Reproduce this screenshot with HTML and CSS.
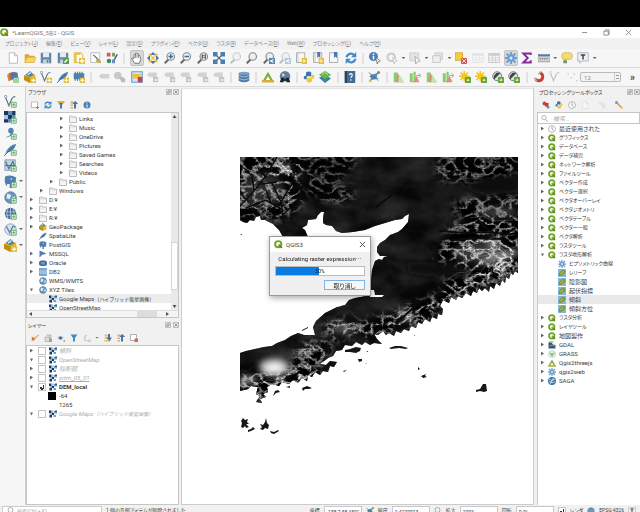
FILE: index.html
```html
<!DOCTYPE html>
<html lang="ja">
<head>
<meta charset="utf-8">
<title>LearnQGIS - QGIS</title>
<link rel="stylesheet" href="styles.css">
</head>
<body>
<svg class="defs" aria-hidden="true">
  <symbol id="q" viewBox="0 0 16 16"><circle cx="7.500" cy="7.500" r="5.500" fill="#fff" stroke="#6fa42c" stroke-width="3.500"/><path d="M8 8l6 6" stroke="#4f8a1c" stroke-width="3"/><path d="M7 7h4L7 11z" fill="#edb93b"/></symbol>
  <symbol id="file" viewBox="0 0 16 16"><path d="M3 1h7l4 4v10H3z" fill="#fff" stroke="#aaa"/><path d="M10 1v4h4" fill="#eee" stroke="#aaa"/></symbol>
  <symbol id="open" viewBox="0 0 16 16"><path d="M1 3h5l2 2h6v9H1z" fill="#d9a827"/><path d="M4 7h12l-3 7H1z" fill="#f7d56e" stroke="#deb23c"/></symbol>
  <symbol id="save" viewBox="0 0 16 16"><path d="M1 1h14v14H1z" fill="#6486a8"/><path d="M4 1h8v6H4z" fill="#e4ebf1"/><path d="M4 10h8v5H4z" fill="#c3d1de"/><path d="M9 11h2v3H9z" fill="#506d8b"/></symbol>
  <symbol id="saveas" viewBox="0 0 16 16"><use href="#save"/><path d="M8 8h8v8H8z" fill="#5a9c55"/><path d="M10 14l4-4" stroke="#fff" stroke-width="2"/></symbol>
  <symbol id="layout" viewBox="0 0 16 16"><path d="M2 1h9l2 3v10H2z" fill="#fff" stroke="#c8a436"/><path d="M1 1h4v14H1zM1 1h9v3H1z" fill="#e8c451"/><path d="M8 8h8v8H8z" fill="#e7bf2f"/><path d="M12 9v6M9 12h6" stroke="#fff" stroke-width="2"/></symbol>
  <symbol id="manager" viewBox="0 0 16 16"><path d="M1 1h12v13H1z" fill="#fff" stroke="#aaa"/><path d="M4 4l3 2 7 8" stroke="#6688a9" stroke-width="2" fill="none"/><path d="M8 11l6 3" stroke="#dfae2d" stroke-width="3"/></symbol>
  <symbol id="style" viewBox="0 0 16 16"><path d="M1 1h5v5H1z" fill="#d45e4d"/><path d="M8 1h4v5H8z" fill="#7a9f68"/><circle cx="4" cy="12" r="3" fill="#42885a"/><path d="M9 14l6-11" stroke="#555" stroke-width="2"/><path d="M8 10h4v5H8z" fill="#6591be"/></symbol>
  <symbol id="hand" viewBox="0 0 16 16"><path d="M5 15l-4-6q0-2 3 0V4q1-2 2 0V2q1-2 2 0v1q1-2 2 0v2q2-1 2 1l1 4-2 5z" fill="#fff" stroke="#555"/><path d="M6 4v4M8 3v5M10 4v4" stroke="#777" fill="none"/></symbol>
  <symbol id="pan" viewBox="0 0 16 16"><path d="M8 0l4 4H4zM8 16l4-4H4zM0 8l4-4v8zM16 8l-4-4v8z" fill="#4877ac"/><path d="M0 0h4v4H0zM12 0h4v4h-4zM0 12h4v4H0zM12 12h4v4h-4zM4 4h8v8H4z" fill="#edc63e" transform="translate(4 4) scale(.5)"/><path d="M2 2h3v3H2zM11 2h3v3h-3zM2 11h3v3H2zM11 11h3v3h-3z" fill="#edc63e"/></symbol>
  <symbol id="lens" viewBox="0 0 16 16"><path d="M6 10l-5 5" stroke="#666" stroke-width="2.500"/><circle cx="9" cy="6" r="5" fill="#e9f0f5" stroke="#888" stroke-width="1.500"/></symbol>
  <symbol id="zin" viewBox="0 0 16 16"><use href="#lens"/><path d="M9 3v6M6 6h6" stroke="#376da9" stroke-width="2"/></symbol>
  <symbol id="zout" viewBox="0 0 16 16"><use href="#lens"/><path d="M6 6h6" stroke="#376da9" stroke-width="2"/></symbol>
  <symbol id="znat" viewBox="0 0 16 16"><use href="#lens"/><path d="M7 3v6M11 3v6M9 4v1M9 7v1" stroke="#444" stroke-width="1.500"/></symbol>
  <symbol id="zlast" viewBox="0 0 16 16"><use href="#lens"/><path d="M8 8h8v8H8z" fill="#5486ba"/><path d="M14 10l-4 2 4 2" stroke="#fff" fill="none" stroke-width="1.500"/></symbol>
  <symbol id="full" viewBox="0 0 16 16"><path d="M3 3l10 10M13 3L3 13" stroke="#666" stroke-width="1.500"/><path d="M0 0h6v6H0zM10 0h6v6h-6zM0 10h6v6H0zM10 10h6v6h-6z" fill="#4b7eb0"/></symbol>
  <symbol id="bookadd" viewBox="0 0 16 16"><path d="M2 1h11v13H2z" fill="#f6f6f6" stroke="#999"/><path d="M4 1v13" stroke="#bbb"/><path d="M9 8h7v8H9z" fill="#e6bd32"/><path d="M12 9v6M10 12h5" stroke="#fff"/></symbol>
  <symbol id="book" viewBox="0 0 16 16"><path d="M2 1h11v13H2z" fill="#f6f6f6" stroke="#999"/><path d="M8 0h4v8l-2-2-2 2z" fill="#4e78a8"/></symbol>
  <symbol id="bookmark" viewBox="0 0 16 16"><use href="#bookadd"/><path d="M7 0h4v8L9 6 7 8z" fill="#4e78a8"/></symbol>
  <symbol id="refresh" viewBox="0 0 16 16"><path d="M2 7a6 6 0 0 1 10-3M14 9a6 6 0 0 1-10 3" fill="none" stroke="#4289c8" stroke-width="3"/><path d="M15 0v7H8zM1 16V9h7z" fill="#4289c8"/></symbol>
  <symbol id="info" viewBox="0 0 16 16"><circle cx="8" cy="8" r="7" fill="#4a80b8"/><path d="M8 3v2M8 7v6" stroke="#fff" stroke-width="2"/></symbol>
  <symbol id="ident" viewBox="0 0 16 16"><circle cx="6" cy="6" r="6" fill="#4a80b8"/><path d="M6 2v2M6 5v5" stroke="#fff" stroke-width="2"/><path d="M9 7l6 5-3 1-1 3z" fill="#fff" stroke="#666"/></symbol>
  <symbol id="gear" viewBox="0 0 16 16"><circle cx="8" cy="8" r="5" fill="#6d9ed1"/><path d="M8 0v16M0 8h16M2 2l12 12M14 2L2 14" stroke="#6d9ed1" stroke-width="2.500"/><circle cx="8" cy="8" r="2" fill="#dde8f4"/></symbol>
  <symbol id="graygear" viewBox="0 0 16 16"><circle cx="7" cy="7" r="5" fill="none" stroke="#ccc" stroke-width="3"/><path d="M9 7l6 5-3 1-1 3z" fill="#fff" stroke="#bbb"/></symbol>
  <symbol id="select" viewBox="0 0 16 16"><path d="M1 1h12v11H1z" fill="#e3e3e3" stroke="#bbb" stroke-dasharray="2 1"/><path d="M8 6l7 6-4 1-2 3z" fill="#fff" stroke="#999"/></symbol>
  <symbol id="forms" viewBox="0 0 16 16"><path d="M4 1h10v9H4z" fill="#e3e3e3" stroke="#ccc"/><path d="M1 5h10v9H1z" fill="#eee" stroke="#bbb"/></symbol>
  <symbol id="desel" viewBox="0 0 16 16"><path d="M0 1h10v10H0z" fill="#f3cf33" stroke="#ca9e24"/><path d="M8 8h8v8H8z" fill="#d95650"/><path d="M9 9l6 6M15 9l-6 6" stroke="#fff"/></symbol>
  <symbol id="table" viewBox="0 0 16 16"><path d="M1 2h14v12H1z" fill="#f6f6f6" stroke="#bbb"/><path d="M1 2h14v3H1z" fill="#c8ced5"/><path d="M1 8h14M1 11h14M6 2v12M10 2v12" stroke="#ccc"/></symbol>
  <symbol id="sigma" viewBox="0 0 16 16"><path d="M13 4V2H3l6 6-6 6h10v-3" fill="none" stroke="#872b94" stroke-width="2.500"/></symbol>
  <symbol id="ruler" viewBox="0 0 16 16"><path d="M0 3h16v3H0z" fill="#5f7990"/><path d="M0 8h16v5H0z" fill="#ddd" stroke="#888"/><path d="M3 8v3M6 8v3M9 8v3M12 8v3" stroke="#777"/></symbol>
  <symbol id="tip" viewBox="0 0 16 16"><rect x="1" y="1" width="14" height="9" rx="4" fill="#f5dc71" stroke="#d1b149"/><path d="M4 9v5l5-5z" fill="#e6c451"/><path d="M3 11h5v4H3z" fill="#6e9c68"/></symbol>
  <symbol id="note" viewBox="0 0 16 16"><path d="M1 1h14v11H7l-3 3v-3H1z" fill="#edf1f4" stroke="#9aa7b2"/><path d="M5 4h6M8 4v6" stroke="#444" stroke-width="2"/></symbol>
  <symbol id="layers" viewBox="0 0 16 16"><path d="M0 5l9-3 2 8-9 4z" fill="#d58b39"/><path d="M2 3l9-2 3 8-10 3z" fill="#bd6257"/><path d="M5 2h9l1 8-9 1z" fill="#4879aa"/></symbol>
  <symbol id="plus" viewBox="0 0 16 16"><path d="M9 9h6v6H9z" fill="#eef6ec" stroke="#58a252"/><path d="M12 10v4M10 12h4" stroke="#58a252"/></symbol>
  <symbol id="star" viewBox="0 0 16 16"><path d="M9 9h7v7H9z" fill="#e4bb2e"/><path d="M12.500 10v5M10 12.500h5" stroke="#fff" stroke-width="1.500"/></symbol>
  <symbol id="pkg" viewBox="0 0 16 16"><path d="M0 6l7-4 8 3v7l-7 4-8-4z" fill="#e5b820"/><path d="M0 6l8 3v7l-8-4z" fill="#c18d13"/><path d="M2 5l6-5 5 5-5 3z" fill="#4f83b0"/><path d="M5 5l4-3" stroke="#d8e8f1" stroke-width="2"/></symbol>
  <symbol id="vee" viewBox="0 0 16 16"><path d="M2 3l4 10 4-9q1-2 4-2" fill="none" stroke="#687886" stroke-width="1.500"/><circle cx="2" cy="2" r="1.500" fill="#fff" stroke="#5c86ac"/></symbol>
  <symbol id="feather" viewBox="0 0 16 16"><path d="M1 14Q5 3 15 1q-2 10-12 11z" fill="#5284b4"/><path d="M0 16L12 4" stroke="#345c81"/></symbol>
  <symbol id="chip" viewBox="0 0 16 16"><path d="M1 3h14v8H1z" fill="#4f80ae"/><path d="M3 1v12M6 1v12M9 1v12M12 1v12" stroke="#4f80ae" stroke-width="1.500"/></symbol>
  <symbol id="raster" viewBox="0 0 16 16"><path d="M0 0h14v14H0z" fill="#a9c5df"/><path d="M0 0h5v5H0zM10 0h4v5h-4zM5 5h5v5H5zM0 10h5v4H0z" fill="#1e3656"/><path d="M5 0h5v5H5zM10 5h4v5h-4zM5 10h5v4H5z" fill="#5a8fc3"/></symbol>
  <symbol id="comma" viewBox="0 0 16 16"><path d="M3 12q5-1 5-4a3.500 3.500 0 1 1 4-4q0 7-9 9z" fill="#5381b2"/></symbol>
  <symbol id="mesh" viewBox="0 0 16 16"><path d="M1 1h13v13H1z" fill="#c2d3e2" stroke="#7c9ab6"/><path d="M2 3l4 9 5-9 3 9M1 8h13" fill="none" stroke="#52728f" stroke-width="1.500"/></symbol>
  <symbol id="eleph" viewBox="0 0 16 16"><path d="M1 2q7-3 14 1l-1 8-4 1v4H7v-5H4L3 14 1 9z" fill="#4f7fae"/><circle cx="9" cy="5" r="1" fill="#dce8f2"/></symbol>
  <symbol id="globe" viewBox="0 0 16 16"><circle cx="8" cy="8" r="7" fill="#6996c0" stroke="#45749f"/><path d="M4 3l5 2-2 5-4-1zM10 8l4-2-2 7z" fill="#e3edf5"/></symbol>
  <symbol id="wire" viewBox="0 0 16 16"><circle cx="8" cy="8" r="7" fill="#3f6894"/><path d="M1 6h14M1 10h14M8 1v14M5 2q-3 6 0 12M11 2q3 6 0 12" fill="none" stroke="#b9d0e4"/></symbol>
  <symbol id="vglobe" viewBox="0 0 16 16"><circle cx="8" cy="8" r="7" fill="#d5e3ee" stroke="#7ca0c0"/><path d="M3 4l4 8 4-8 3 1" fill="none" stroke="#577b99" stroke-width="1.500"/></symbol>
  <symbol id="label" viewBox="0 0 16 16"><path d="M1 7l3-3h11v6H4z" fill="#d2d2d2"/></symbol>
  <symbol id="label2" viewBox="0 0 16 16"><path d="M0 5l3-3h10v6H3z" fill="#d2d2d2"/><path d="M8 8h7v7H8z" fill="#c4c4c4"/><path d="M10 12h4" stroke="#fff" stroke-width="1.500"/></symbol>
  <symbol id="diagram" viewBox="0 0 16 16"><circle cx="5" cy="6" r="5" fill="#c9c9c9"/><path d="M7 8h5l3 3v4h-5z" fill="#bdbdbd"/></symbol>
  <symbol id="pin" viewBox="0 0 16 16"><path d="M1 1h14v14H1z" fill="#d2e6f6" stroke="#5c9fd6" stroke-width="1.500"/><path d="M2 4h11v6H2z" fill="#ecc13c"/><path d="M9 8h6v7H9z" fill="#d13e35"/></symbol>
  <symbol id="db" viewBox="0 0 16 16"><path d="M1 3v10q7 4 14 0V3z" fill="#4c7aaa"/><ellipse cx="8" cy="3" rx="7" ry="2" fill="#7ba0c5"/><path d="M1 6q7 4 14 0M1 10q7 4 14 0" fill="none" stroke="#c0d2e4"/></symbol>
  <symbol id="tri" viewBox="0 0 16 16"><path d="M8 1l8 14H0z" fill="#7eae39"/><path d="M8 7l3 5H5z" fill="#fff"/><path d="M0 12h16v3H0z" fill="#e0aa32"/></symbol>
  <symbol id="bino" viewBox="0 0 16 16"><circle cx="8" cy="7" r="7" fill="#60809f"/><path d="M4 3l4 2-3 3z" fill="#dce5ed"/><path d="M1 15l2-6h4v2h2V9h4l2 6h-5v-2H6v2z" fill="#222"/></symbol>
  <symbol id="py" viewBox="0 0 16 16"><path d="M4 5V2q4-3 7 0v5H5v4H2q-3-4 2-5z" fill="#3d74a6"/><path d="M12 11v3q-4 3-7 0V9h6V5h3q3 4-2 6z" fill="#f0c840"/></symbol>
  <symbol id="stack" viewBox="0 0 16 16"><path d="M0 9l8-4 8 5-8 6z" fill="#3d83a5"/><path d="M0 5l8-5 8 5-8 6z" fill="#67b64a"/><path d="M4 5l4-3 4 3" stroke="#d7eda1" fill="none"/></symbol>
  <symbol id="help" viewBox="0 0 16 16"><path d="M1 0h14v16H1z" fill="#456d94"/><path d="M1 0h3v16H1z" fill="#28445f"/><path d="M7 5q3-3 4 0 0 2-2 4M9 11v2" fill="none" stroke="#fff" stroke-width="1.500"/></symbol>
  <symbol id="georef" viewBox="0 0 16 16"><path d="M3 5l10-2-2 8-7 1z" fill="#5f93c4"/><path d="M1 2q5 3 13 11M14 1Q9 6 2 14M2 7l12 3" stroke="#4d6a84" fill="none"/><circle cx="3" cy="13" r="2" fill="#e0bd4d"/><circle cx="14" cy="2" r="2" fill="#5c9f51"/></symbol>
  <symbol id="hist" viewBox="0 0 16 16"><path d="M1 2h5v13H1z" fill="#86cf6c"/><path d="M4 15L6 2l4 9 5 4z" fill="#de8977"/><path d="M7 15l1-11 7 11z" fill="#c4e2b3"/></symbol>
  <symbol id="hist2" viewBox="0 0 16 16"><path d="M1 3h4v12H1zM6 1h3v14H6z" fill="#86cf6c"/><path d="M5 15l5-9 4 9z" fill="#d39486"/><path d="M10 6h5M13 3l3 3-3 3" stroke="#888" fill="none"/></symbol>
  <symbol id="sun" viewBox="0 0 16 16"><path d="M7 0v14M0 7h14M2 2l10 10M12 2L2 12" stroke="#efc522" stroke-width="2"/><circle cx="7" cy="7" r="4" fill="#f4c916"/><path d="M8 8h8v8H8z" fill="#67a83f"/><path d="M12 10l2 3h-4z" fill="#fff"/></symbol>
  <symbol id="contrast" viewBox="0 0 16 16"><circle cx="7" cy="7" r="6" fill="#ddd" stroke="#555"/><path d="M3 11L11 3a6 6 0 0 0-8 8z" fill="#444"/><path d="M8 8h8v8H8z" fill="#67a83f"/><path d="M12 10l2 3h-4z" fill="#fff"/></symbol>
  <symbol id="magnet" viewBox="0 0 16 16"><path d="M3 11l4 2q6 0 6-6 0-3-4-5" fill="none" stroke="#cf3e31" stroke-width="4"/><path d="M2 9l3 5M7 4l4-3" stroke="#aaa" stroke-width="2"/></symbol>
  <symbol id="dots" viewBox="0 0 16 16"><path d="M2 3h2v2H2zM10 3h2v2h-2zM6 8h2v2H6zM13 12h2v2h-2z" fill="#ccc"/></symbol>
  <symbol id="folder" viewBox="0 0 16 16"><path d="M1 2h5l2 2h7v11H1z" fill="#f4f4f4" stroke="#aaa" stroke-width="1.500"/><path d="M1 6h14" stroke="#ccc"/></symbol>
  <symbol id="arrow" viewBox="0 0 16 16"><path d="M1 1l14 6-9 3-5 5z" fill="#4f7fae"/></symbol>
  <symbol id="oracle" viewBox="0 0 16 16"><rect x="0" y="3" width="16" height="11" rx="5" fill="#446f9a"/><rect x="4" y="6" width="8" height="5" rx="2" fill="#6f98be"/></symbol>
  <symbol id="db2" viewBox="0 0 16 16"><path d="M0 0h16v16H0z" fill="#7ba7ce"/><path d="M2 5v6q4 0 4-3T2 5M8 5v6h2V5zM12 5h3v3h-3v3h3" fill="none" stroke="#dceaf5"/></symbol>
  <symbol id="xyz" viewBox="0 0 16 16"><path d="M0 1h5v5H0zM5 6h5v4H5zM1 10h5v5H1z" fill="#1d3a5e"/><path d="M10 2h6v5h-6zM9 10h5v4H9z" fill="#6a9dca"/><path d="M5 1h4v5H5zM1 6h4v4H1z" fill="#9abbd9"/><path d="M12 1h4v3h-4z" fill="#31587f"/></symbol>
  <symbol id="filter" viewBox="0 0 16 16"><path d="M1 1h14L10 8v7H6V8z" fill="#4b7ba7"/><path d="M1 1h14v3H1z" fill="#e0b43b"/></symbol>
  <symbol id="bluefilter" viewBox="0 0 16 16"><path d="M1 1h14L10 8v7H6V8z" fill="#4b88b8"/></symbol>
  <symbol id="collapse" viewBox="0 0 16 16"><path d="M1 1h8v4H1zM1 7h5v3H1zM1 12h5v3H1z" fill="#dfaa6b"/><path d="M8 15V6H5l6-6 5 6h-4v9z" fill="#4474a4"/></symbol>
  <symbol id="expand" viewBox="0 0 16 16"><path d="M1 1h6v4H1zM1 7h5v3H1zM1 12h12v3H1z" fill="#dfc174"/><path d="M8 0v7H4l7 7 5-7h-4V0z" fill="#4474a4"/></symbol>
  <symbol id="addsel" viewBox="0 0 16 16"><path d="M1 2h12v11H1z" fill="#fff" stroke="#aaa" stroke-width="1.500"/><path d="M10 13h6M13 10v6" stroke="#58a252" stroke-width="2"/></symbol>
  <symbol id="remove" viewBox="0 0 16 16"><path d="M1 1h12v12H1z" fill="#fff" stroke="#999" stroke-width="1.500"/><path d="M9 9h7v7H9z" fill="#d9665d"/></symbol>
  <symbol id="brush" viewBox="0 0 16 16"><path d="M1 6q4-1 8 3-3 6-8 4 2-3 0-7z" fill="#dc773e"/><path d="M7 9l8-7" stroke="#e2ba42" stroke-width="3"/></symbol>
  <symbol id="group" viewBox="0 0 16 16"><path d="M2 6h9v9H2zM5 2h9v11" fill="#ddd" stroke="#888"/><path d="M10 9h6v7h-6z" fill="#8cb388"/></symbol>
  <symbol id="eye" viewBox="0 0 16 16"><path d="M0 8q7-9 14 0-7 7-14 0z" fill="#b7c6d3"/><circle cx="7" cy="8" r="3" fill="#466987"/><path d="M13 13h3v2h-3z" fill="#555"/></symbol>
  <symbol id="expr" viewBox="0 0 16 16"><path d="M8 3q-6-1-5 4 4-1 3 0-5 0-3 6h5M10 12h5v3h-5z" fill="none" stroke="#bbb" stroke-width="1.500"/></symbol>
  <symbol id="clock" viewBox="0 0 16 16"><circle cx="8" cy="8" r="7" fill="#fafafa" stroke="#aaa" stroke-width="1.500"/><path d="M8 3v5l3 3" fill="none" stroke="#888" stroke-width="1.500"/></symbol>
  <symbol id="model" viewBox="0 0 16 16"><circle cx="5" cy="5" r="4" fill="#d4443a"/><path d="M6 4h7v7H6z" fill="#c83c36"/><circle cx="12" cy="12" r="3" fill="#678ba9"/></symbol>
  <symbol id="wrench" viewBox="0 0 16 16"><path d="M3 3l10 10" stroke="#999" stroke-width="3"/><circle cx="3" cy="3" r="3" fill="#8f9294"/><path d="M7 7l8 8" stroke="#e4b537" stroke-width="3"/></symbol>
  <symbol id="relief" viewBox="0 0 16 16"><path d="M0 0h16v16H0z" fill="#83b6d7"/><path d="M1 13Q3 4 10 1q6 1 4 7-6 8-13 5z" fill="#669c38"/><path d="M4 11q2-7 8-8-1 7-8 8z" fill="#e0cf57"/><path d="M6 9l5-5" stroke="#c45a42" stroke-width="2"/></symbol>
  <symbol id="gdal" viewBox="0 0 16 16"><path d="M1 3h6l3 4 5 1v7H1z" fill="#38576f"/><path d="M3 11q6-6 12 1" stroke="#77abd0" stroke-width="2" fill="none"/><path d="M2 2h9" stroke="#6d9b54" stroke-width="2"/></symbol>
  <symbol id="grass" viewBox="0 0 16 16"><circle cx="8" cy="8" r="7" fill="#e6efe5" stroke="#a6b9a6"/><path d="M8 13V6M8 10Q4 9 4 5M8 10q4-1 4-5" fill="none" stroke="#4b9b5c" stroke-width="1.500"/></symbol>
  <symbol id="saga" viewBox="0 0 16 16"><circle cx="8" cy="8" r="8" fill="#3875a7"/><path d="M2 4q5 5 12 1M2 9q6 4 12 1M4 14l7-12" fill="none" stroke="#e5f1f8" stroke-width="1.500"/></symbol>
  <symbol id="search" viewBox="0 0 16 16"><circle cx="7" cy="6" r="5" fill="none" stroke="#999" stroke-width="1.500"/><path d="M10 10l5 5" stroke="#999" stroke-width="2"/></symbol>
  <symbol id="float" viewBox="0 0 16 16"><rect x="1" y="1" width="14" height="14" rx="2" fill="#f4f4f4" stroke="#888" stroke-width="1.500"/><path d="M7 4h5v5H7zM4 7h5v5H4z" fill="none" stroke="#888" stroke-width="1.500"/></symbol>
  <symbol id="close" viewBox="0 0 16 16"><rect x="1" y="1" width="14" height="14" rx="2" fill="#eee" stroke="#888" stroke-width="1.500"/><path d="M4 4l8 8M12 4l-8 8" stroke="#777" stroke-width="2"/></symbol>
</svg>

<div class="letterbox"></div>
<header class="titlebar">
  <svg class="s9"><use href="#q"/></svg><h1>*LearnQGIS_<span class="ja">5章2</span> - QGIS</h1>
  <div class="winbtns">
    <button aria-label="最小化"><svg viewBox="0 0 8 8"><path d="M1 4h6" stroke="#888"/></svg></button>
    <button aria-label="元に戻す"><svg viewBox="0 0 8 8"><path d="M2.500 2V1H7v5H6M1 2.500h5V7H1z" fill="none" stroke="#888"/></svg></button>
    <button aria-label="閉じる"><svg viewBox="0 0 8 8"><path d="M1 1l6 6M7 1L1 7" stroke="#888"/></svg></button>
  </div>
</header>
<nav class="menubar">
  <a href="#">プロジェクト(<u>J</u>)</a><a href="#">編集(<u>E</u>)</a><a href="#">ビュー(<u>V</u>)</a><a href="#">レイヤ(<u>L</u>)</a><a href="#">設定(<u>S</u>)</a><a href="#">プラグイン(<u>P</u>)</a><a href="#">ベクタ(<u>O</u>)</a><a href="#">ラスタ(<u>R</u>)</a><a href="#">データベース(<u>D</u>)</a><a href="#">Web(<u>W</u>)</a><a href="#">プロセッシング(<u>C</u>)</a><a href="#">ヘルプ(<u>H</u>)</a>
</nav>

<div class="toolbar">
  <div class="group n7">
    <button aria-label="新規"><svg><use href="#file"/></svg></button>
    <button aria-label="開く"><svg><use href="#open"/></svg></button>
    <button aria-label="保存"><svg><use href="#save"/></svg></button>
    <button aria-label="別名保存"><svg><use href="#saveas"/></svg></button>
    <button aria-label="新規レイアウト"><svg><use href="#layout"/></svg></button>
    <button aria-label="レイアウト管理"><svg><use href="#manager"/></svg></button>
    <button aria-label="スタイル"><svg><use href="#style"/></svg></button>
  </div>
  <i class="grip"></i>
  <div class="group n14">
    <button class="on" aria-label="移動"><svg><use href="#hand"/></svg></button>
    <button aria-label="選択部に移動"><svg><use href="#pan"/></svg></button>
    <button aria-label="拡大"><svg><use href="#zin"/></svg></button>
    <button aria-label="縮小"><svg><use href="#zout"/></svg></button>
    <button aria-label="等倍"><svg><use href="#znat"/></svg></button>
    <button aria-label="全域"><svg><use href="#full"/></svg></button>
    <button class="dim" aria-label="選択部"><svg><use href="#lens"/></svg></button>
    <button aria-label="レイヤ"><svg><use href="#lens"/></svg></button>
    <button aria-label="前の表示"><svg><use href="#zlast"/></svg></button>
    <button class="dim" aria-label="次の表示"><svg><use href="#zlast"/></svg></button>
    <button aria-label="新規ビュー"><svg><use href="#bookadd"/></svg></button>
    <button aria-label="新規ブックマーク"><svg><use href="#bookmark"/></svg></button>
    <button aria-label="ブックマーク"><svg><use href="#book"/></svg></button>
    <button aria-label="更新"><svg><use href="#refresh"/></svg></button>
  </div>
  <i class="grip"></i>
  <div class="group n14">
    <button aria-label="地物情報"><svg><use href="#ident"/></svg></button>
    <button aria-label="アクション"><svg><use href="#graygear"/></svg></button><i class="dd"></i>
    <button aria-label="選択"><svg><use href="#select"/></svg></button><i class="dd"></i>
    <button aria-label="値で選択"><svg><use href="#forms"/></svg></button><i class="dd"></i>
    <button aria-label="選択解除"><svg><use href="#desel"/></svg></button>
    <button class="dim" aria-label="属性テーブル"><svg><use href="#table"/></svg></button>
    <button aria-label="計算機"><svg><use href="#table"/></svg></button>
    <button class="on" aria-label="ツールボックス"><svg><use href="#gear"/></svg></button>
    <button aria-label="統計"><svg><use href="#sigma"/></svg></button>
    <button aria-label="計測"><svg><use href="#ruler"/></svg></button><i class="dd"></i>
    <button aria-label="ヒント"><svg><use href="#tip"/></svg></button>
    <button aria-label="注記"><svg><use href="#note"/></svg></button><i class="dd"></i>
  </div>
  <div class="rest"></div>
</div>

<div class="toolbar">
  <div class="group n5">
    <button aria-label="データソース"><svg><use href="#layers"/><use href="#plus"/></svg></button>
    <button aria-label="GeoPackage作成"><svg><use href="#pkg"/><use href="#star"/></svg></button>
    <button aria-label="シェープ作成"><svg><use href="#vee"/><use href="#star"/></svg></button>
    <button aria-label="SpatiaLite作成"><svg><use href="#feather"/><use href="#star"/></svg></button>
    <button aria-label="仮レイヤ"><svg><use href="#chip"/><use href="#star"/></svg></button>
  </div>
  <i class="grip"></i>
  <div class="group n8">
    <button aria-label="ラベル"><svg><use href="#label"/></svg></button>
    <button aria-label="ダイアグラム"><svg><use href="#diagram"/></svg></button>
    <button aria-label="ピン強調"><svg><use href="#pin"/></svg></button>
    <button aria-label="ピン"><svg><use href="#label2"/></svg></button>
    <button aria-label="表示"><svg><use href="#label2"/></svg></button>
    <button aria-label="ラベル移動"><svg><use href="#label2"/></svg></button>
    <button aria-label="回転"><svg><use href="#label2"/></svg></button>
    <button aria-label="変更"><svg><use href="#label2"/></svg></button>
  </div>
  <i class="grip"></i>
  <div class="group n1"><button aria-label="DBマネージャ"><svg><use href="#db"/></svg></button></div>
  <i class="grip"></i>
  <div class="group n2">
    <button aria-label="Qgis2threejs"><svg><use href="#tri"/></svg></button>
    <button aria-label="メタ検索"><svg><use href="#bino"/></svg></button>
  </div>
  <i class="grip"></i>
  <div class="group n2">
    <button aria-label="Python"><svg><use href="#py"/></svg></button>
    <button aria-label="プラグイン"><svg><use href="#stack"/></svg></button>
  </div>
  <i class="grip"></i>
  <div class="group n1"><button aria-label="ヘルプ"><svg><use href="#help"/></svg></button></div>
  <i class="grip"></i>
  <div class="group n1"><button aria-label="ジオリファレンサ"><svg><use href="#georef"/></svg></button></div>
  <i class="grip"></i>
  <div class="group n8">
    <button aria-label="ヒストグラム"><svg><use href="#hist"/></svg></button>
    <button aria-label="全体ヒストグラム"><svg><use href="#hist2"/></svg></button>
    <button aria-label="累積カット"><svg><use href="#hist"/></svg></button>
    <button aria-label="全体累積カット"><svg><use href="#hist2"/></svg></button>
    <button aria-label="明るく"><svg><use href="#sun"/></svg></button>
    <button aria-label="暗く"><svg><use href="#sun"/></svg></button>
    <button aria-label="コントラスト増"><svg><use href="#contrast"/></svg></button>
    <button aria-label="コントラスト減"><svg><use href="#contrast"/></svg></button>
  </div>
  <i class="grip"></i>
  <div class="group n3">
    <button aria-label="スナップ"><svg><use href="#magnet"/></svg></button>
    <button class="dim" aria-label="頂点"><svg><use href="#vee"/></svg></button>
    <button aria-label="トポロジ"><svg><use href="#dots"/></svg></button>
  </div>
  <div class="spin"><input aria-label="許容範囲" value="12"><i class="updown"></i></div>
  <span class="more">»</span>
</div>

<main class="work">
  <aside class="strip">
    <div><button aria-label="ベクタ追加"><svg><use href="#vee"/><use href="#plus"/></svg></button></div>
    <div><button aria-label="ラスタ追加"><svg><use href="#raster"/><use href="#plus"/></svg></button></div>
    <div><button aria-label="CSV追加"><svg><use href="#comma"/><use href="#plus"/></svg></button></div>
    <div><button aria-label="SpatiaLite追加"><svg><use href="#feather"/><use href="#plus"/></svg></button></div>
    <div><button aria-label="仮想レイヤ追加"><svg><use href="#mesh"/><use href="#plus"/></svg></button></div>
    <div><button aria-label="PostGIS追加"><svg><use href="#eleph"/><use href="#plus"/></svg></button><i class="dd"></i></div>
    <div><button aria-label="WMS追加"><svg><use href="#globe"/><use href="#plus"/></svg></button><i class="dd"></i></div>
    <div><button aria-label="WCS追加"><svg><use href="#wire"/><use href="#plus"/></svg></button></div>
    <div><button aria-label="WFS追加"><svg><use href="#vglobe"/><use href="#plus"/></svg></button><i class="dd"></i></div>
    <div><button aria-label="GeoPackage追加"><svg><use href="#pkg"/><use href="#star"/></svg></button><i class="dd"></i></div>
  </aside>

  <div class="docks">
    <section class="dock browser">
      <div class="dockhead"><h2>ブラウザ</h2><button aria-label="分離"><svg><use href="#float"/></svg></button><button aria-label="閉じる"><svg><use href="#close"/></svg></button></div>
      <div class="docktools">
        <button aria-label="追加"><svg><use href="#addsel"/></svg></button><button aria-label="更新"><svg><use href="#refresh"/></svg></button><button aria-label="フィルタ"><svg><use href="#filter"/></svg></button><button aria-label="折りたたむ"><svg><use href="#collapse"/></svg></button><button aria-label="情報"><svg><use href="#info"/></svg></button>
      </div>
      <div class="frame">
        <ul class="tree">
          <li class="l3"><i class="tw"></i><svg><use href="#folder"/></svg>Links</li>
          <li class="l3"><i class="tw"></i><svg><use href="#folder"/></svg>Music</li>
          <li class="l3"><i class="tw"></i><svg><use href="#folder"/></svg>OneDrive</li>
          <li class="l3"><i class="tw"></i><svg><use href="#folder"/></svg>Pictures</li>
          <li class="l3"><i class="tw"></i><svg><use href="#folder"/></svg>Saved Games</li>
          <li class="l3"><i class="tw"></i><svg><use href="#folder"/></svg>Searches</li>
          <li class="l3"><i class="tw"></i><svg><use href="#folder"/></svg>Videos</li>
          <li class="l2"><i class="tw"></i><svg><use href="#folder"/></svg>Public</li>
          <li class="l1"><i class="tw"></i><svg><use href="#folder"/></svg>Windows</li>
          <li><i class="tw"></i><svg><use href="#folder"/></svg>D:¥</li>
          <li><i class="tw"></i><svg><use href="#folder"/></svg>E:¥</li>
          <li><i class="tw"></i><svg><use href="#folder"/></svg>R:¥</li>
          <li><i class="tw"></i><svg><use href="#pkg"/></svg>GeoPackage</li>
          <li><i class="tw none"></i><svg><use href="#feather"/></svg>SpatiaLite</li>
          <li><i class="tw none"></i><svg><use href="#eleph"/></svg>PostGIS</li>
          <li><i class="tw"></i><svg><use href="#arrow"/></svg>MSSQL</li>
          <li><i class="tw"></i><svg><use href="#oracle"/></svg>Oracle</li>
          <li><i class="tw"></i><svg><use href="#db2"/></svg>DB2</li>
          <li><i class="tw none"></i><svg><use href="#globe"/></svg>WMS/WMTS</li>
          <li><i class="tw open"></i><svg><use href="#globe"/></svg>XYZ Tiles</li>
          <li class="l1 sel"><i class="tw none"></i><svg><use href="#xyz"/></svg><span>Google Maps<span class="ja wide">（ハイブリッド衛星画像）</span></span></li>
          <li class="l1"><i class="tw none"></i><svg><use href="#xyz"/></svg>OpenStreetMap</li>
        </ul>
        <div class="vbar"><b class="up"></b><span></span><b class="down"></b></div>
        <div class="hbar"><b class="left"></b><span></span><b class="right"></b></div>
      </div>
    </section>
    <section class="dock layerpane">
      <div class="dockhead"><h2>レイヤー</h2><button aria-label="分離"><svg><use href="#float"/></svg></button><button aria-label="閉じる"><svg><use href="#close"/></svg></button></div>
      <div class="docktools">
        <button aria-label="スタイル"><svg><use href="#brush"/></svg></button><button aria-label="グループ"><svg><use href="#group"/></svg></button><button aria-label="テーマ"><svg><use href="#eye"/></svg></button><button aria-label="フィルタ"><svg><use href="#bluefilter"/></svg></button><button aria-label="式"><svg><use href="#expr"/></svg></button><i class="dd"></i><button aria-label="展開"><svg><use href="#expand"/></svg></button><button aria-label="折りたたむ"><svg><use href="#collapse"/></svg></button><button aria-label="削除"><svg><use href="#remove"/></svg></button>
      </div>
      <div class="frame">
        <ul class="tree">
          <li class="off"><i class="tw"></i><input type="checkbox" id="c1"><svg><use href="#xyz"/></svg><label for="c1">傾斜</label></li>
          <li class="off"><i class="tw open"></i><input type="checkbox" id="c2"><svg><use href="#xyz"/></svg><label for="c2">OpenStreetMap</label></li>
          <li class="off"><i class="tw"></i><input type="checkbox" id="c3"><svg><use href="#xyz"/></svg><label for="c3">陰影図</label></li>
          <li class="off"><i class="tw"></i><input type="checkbox" id="c4"><svg><use href="#xyz"/></svg><label for="c4"><u>srtm_05_01</u></label></li>
          <li class="cur"><i class="tw open"></i><input type="checkbox" id="c5" checked><svg><use href="#xyz"/></svg><label for="c5">DEM_local</label></li>
          <li class="leg"><i class="swatch black"></i>-64</li>
          <li class="leg"><i class="swatch"></i>1265</li>
          <li class="off"><i class="tw open"></i><input type="checkbox" id="c6"><svg><use href="#xyz"/></svg><label for="c6">Google Maps<span class="ja wide">（ハイブリッド衛星画像）</span></label></li>
        </ul>
      </div>
    </section>
  </div>

  <section class="canvas">
    <svg class="map" viewBox="182 89 351 415">
      <defs>
        <clipPath id="land">
          <path d="M240 157H518V273L515 271 513 275 511 273 509 279 506 277 505 283 502 280 500 286 496 283 494 289 490 286 489 292 485 288 482 291 479 288 477 293 473 291 471 296 466 293 462 298 458 296 456 300 451 297 449 303 443 300 440 306 443 309 442 315 438 314 437 319 432 317 430 322 425 319 422 324 418 322 416 328 411 326 409 331 404 329 401 333 396 331 394 336 389 333 386 335 383 331 378 335 374 334 377 339 382 344 374 343 370 345 365 342 362 345 356 342 352 346 345 345 342 350 336 351 333 356 328 358 324 361 320 364 326 365 330 361 337 362 334 367 330 366 328 372 323 371 320 375 315 372 312 377 308 375 307 381 302 378 298 383 293 380 289 384 282 382 279 386 272 384 267 387 268 392 263 394 266 397 260 399 262 403 256 402 260 396 256 394 258 387 251 386 248 389 240 391V353L246 351 255 349 264 347 272 346 277 343 285 340 291 336 298 333 304 335 315 335 313 327 316 321 325 313 337 307 345 305 349 300 355 298 366 296 370 290 372 270 375 261 379 259 382 260 384 257 388 256 380 256 377 252 377 247 380 243 385 240 390 235 398 232 402 229 408 222 409 214 405 216 402 219 395 220 385 223 375 226 365 230 353 232 342 233 336 231 332 226 326 225 323 223 323 218 324 212 321 212 318 215 316 219 308 220 307 225 302 228 305 230 308 237H283L279 230 273 224 265 220 261 220 260 216 256 217 254 221 250 220 247 223 243 222 240 220z"/>
        </clipPath>
        <filter id="ridge" x="181" y="88" width="354" height="417" filterUnits="userSpaceOnUse" color-interpolation-filters="sRGB">
          <feGaussianBlur in="SourceGraphic" stdDeviation="4" result="glow"/>
          <feTurbulence type="turbulence" baseFrequency=".09 .12" numOctaves="4" seed="8"/>
          <feColorMatrix values="-3.200 0 0 0 1.150  -3.200 0 0 0 1.150  -3.200 0 0 0 1.150  0 0 0 0 1"/>
          <feGaussianBlur stdDeviation=".4" result="veins"/>
          <feBlend in="glow" in2="veins" mode="multiply" result="m"/>
          <feComposite in="m" in2="glow" operator="in"/>
        </filter>
        <filter id="soft" x="-50%" y="-50%" width="200%" height="200%"><feGaussianBlur stdDeviation="3"/></filter>
        <filter id="grain" x="181" y="88" width="354" height="417" filterUnits="userSpaceOnUse" color-interpolation-filters="sRGB">
          <feTurbulence type="fractalNoise" baseFrequency=".03 .05" numOctaves="4" seed="3"/>
          <feColorMatrix values=".4 0 0 0 -.1  .4 0 0 0 -.1  .4 0 0 0 -.1  0 0 0 0 1"/>
        </filter>
      </defs>
      <g clip-path="url(#land)">
        <path d="M181 88h354v417H181z" fill="#121212"/>
        <path d="M181 88h354v417H181z" filter="url(#grain)" opacity=".6"/>
        <g filter="url(#ridge)">
          <path d="M238 155h66l-8 25 4 25-14 10-12 6-12-8-28 4z" fill="#bbb"/>
          <ellipse cx="286" cy="170" rx="13" ry="10" fill="#fff"/>
          <path d="M300 155h60l-30 30-20 10zM322 188h30v12h-30z" fill="#666"/>
          <path d="M440 157h78v22l-40 2-40-3z" fill="#909090"/>
          <path d="M450 207l30-10 43 0v28l-50-5z" fill="#999"/>
          <path d="M450 226l30-10 40 8v50l-30 10-30 14-30 8 18-22-12-20z" fill="#aaa"/>
          <path d="M460 244l30-6 30 8v18l-50 24-15 0z" fill="#fff"/>
          <path d="M372 320l30-10 25-10 30-15 12 5-50 33-50 14-20-4z" fill="#ccc"/>
          <path d="M322 325l30-7 10 12-28 10z" fill="#bbb"/>
          <path d="M298 348l20-8 14 5-12 20-14 10-14-6z" fill="#bbb"/>
          <path d="M240 376l70-6 20 6-30 12-60 8z" fill="#f0f0f0"/>
          <path d="M240 386h20l10 4-6 14h-24z" fill="#aaa"/>
        </g>
        <g filter="url(#soft)">
          <ellipse cx="274" cy="367" rx="15" ry="9" fill="#eee" opacity=".75"/>
          <ellipse cx="274" cy="368" rx="9" ry="4" fill="#fff"/>
          <ellipse cx="248" cy="380" rx="9" ry="3" fill="#ddd" opacity=".8"/>
          <ellipse cx="493" cy="243" rx="6" ry="4" fill="#ddd" opacity=".7"/>
          <ellipse cx="500" cy="257" rx="22" ry="3" fill="#fff" opacity=".7" transform="rotate(-16 500 257)"/>
          <ellipse cx="480" cy="252" rx="26" ry="10" fill="#999" opacity=".35"/>
          <ellipse cx="498" cy="212" rx="20" ry="6" fill="#999" opacity=".35"/>
          <ellipse cx="408" cy="317" rx="5" ry="3" fill="#fff" opacity=".7"/>
          <ellipse cx="342" cy="329" rx="12" ry="4" fill="#bbb" opacity=".5"/>
          <ellipse cx="285" cy="168" rx="6" ry="4" fill="#ccc" opacity=".5"/>
          <ellipse cx="262" cy="190" rx="22" ry="18" fill="#888" opacity=".3"/>
          <path d="M462 188l18-10 40-6v20l-35 4zM405 262l45 0 30 10-20 8-50-6z" fill="#080808"/>
        </g>
        <g fill="none" stroke="#0b0b0b" stroke-linecap="round">
          <path d="M240 206l14-15 11-14 12-20M254 191l-2-15-8-8M266 177l-8-9M284 224l-3-22-9-19M281 202l12-20 3-22M281 209l-15-9-20 8M283 215l16-17 7-24M291 190l12-8M271 203l-5-13M246 200l-6-9M262 184l14-2M297 200l8-2" stroke-width="1.500"/>
          <path d="M440 231l25 2 20-1 33 3M475 216l8 10 10 6M452 240l25-2 25 1M380 326l-6 8M412 309l-12 11" stroke-width="2"/>
          <path d="M375 208l18-14 18-14" stroke-width="2"/>
        </g>
        <g fill="none" stroke="#ccc" stroke-width=".6" opacity=".4">
          <path d="M460 251l10-6 14-3 10-5 20-2M466 263l15-7 17-3 20-7M448 279l9-6 10-1 12-7 13-2M470 218l13-2 10 5 20-1M465 278l8-8M490 268l5-8M335 329l8-5 12-1M380 322l8-6 12-4 8-5M250 386l18-6 17 3M278 171l8-3 5-8M276 183l-6 6M269 160l7 8M480 273l6-8 9-5M500 246l6 6M474 255l6 5"/>
        </g>
      </g>
      <g fill="#171717">
        <path d="M345 350l5-1 6-2 5 1-1 3-4 2-6-1-5 0zM389 348l6-2 6 0 7 2-2 1-7-1-8 1zM358 359l4 0 0 2-3 1zM476 390l4-1 3-5 3 0 1 7-3 1-4-1-4 1zM418 367l2 2-2 1zM421 376l5-2-1 2 2 1-4 1zM302 388l5-2 5 2-3 1-4 0-2 2zM275 391l3-1 2 2-4 1-3 3zM286 387l4-1 0 2zM241 421l2-3 2 2 3-1-1 3 2 2-3 0 3 3-3 1-1-2-2 2-2-1 1-4zM248 430l3-1 2-2 2 2-4 2-3 1zM260 424l3 1 2-3 1-4 1 5 2 2-1 4-3-1-2 2-3-1 2-2zM270 431l4 1 4-2 1 1-5 3-3-1zM240 234l2 0 0 1zM302 330l6-3 0 1-6 3zM414 335l1 0 0 1zM366 351l2 0 0 1zM343 371l4-1-3 2zM365 363l2 1-1 0z"/>
        <path d="M370 290l4 0 1 5 9 0-2 2-12 0z" fill="#fff"/>
        <path d="M338 307l8-4-2-1-5 2z" fill="#fff"/>
      </g>
    </svg>
    <div class="dialog" role="dialog" aria-label="QGIS3">
      <div class="dlghead"><svg class="s9"><use href="#q"/></svg><h2>QGIS3</h2><button aria-label="閉じる"><svg viewBox="0 0 8 8"><path d="M1 1l6 6M7 1L1 7" stroke="#444"/></svg></button></div>
      <p>Calculating raster expression<span class="cjk">…</span></p>
      <div class="progress"><i></i><span>50%</span></div>
      <button class="cancel">取り消し</button>
    </div>
  </section>

  <section class="dock tools">
    <div class="dockhead"><h2>プロセッシングツールボックス</h2><button aria-label="分離"><svg><use href="#float"/></svg></button><button aria-label="閉じる"><svg><use href="#close"/></svg></button></div>
    <div class="docktools">
      <button aria-label="モデル"><svg><use href="#model"/></svg></button><button aria-label="スクリプト"><svg><use href="#py"/></svg></button><button aria-label="履歴"><svg><use href="#clock"/></svg></button><button class="dim" aria-label="結果"><svg><use href="#file"/></svg></button><i class="gap"></i><button class="dim" aria-label="編集"><svg><use href="#label2"/></svg></button><i class="gap"></i><button aria-label="オプション"><svg><use href="#wrench"/></svg></button>
    </div>
    <div class="search"><svg><use href="#search"/></svg><input aria-label="検索" placeholder="検索..."></div>
    <ul class="tree">
      <li class="big"><i class="tw"></i><svg><use href="#clock"/></svg>最近使用された</li>
      <li><i class="tw"></i><svg><use href="#q"/></svg>グラフィックス</li>
      <li><i class="tw"></i><svg><use href="#q"/></svg>データベース</li>
      <li><i class="tw"></i><svg><use href="#q"/></svg>データ補完</li>
      <li><i class="tw"></i><svg><use href="#q"/></svg>ネットワーク解析</li>
      <li><i class="tw"></i><svg><use href="#q"/></svg>ファイルツール</li>
      <li><i class="tw"></i><svg><use href="#q"/></svg>ベクター作成</li>
      <li><i class="tw"></i><svg><use href="#q"/></svg>ベクター選択</li>
      <li><i class="tw"></i><svg><use href="#q"/></svg>ベクタオーバーレイ</li>
      <li><i class="tw"></i><svg><use href="#q"/></svg>ベクタジオメトリ</li>
      <li><i class="tw"></i><svg><use href="#q"/></svg>ベクタテーブル</li>
      <li><i class="tw"></i><svg><use href="#q"/></svg>ベクター一般</li>
      <li><i class="tw"></i><svg><use href="#q"/></svg>ベクタ解析</li>
      <li><i class="tw"></i><svg><use href="#q"/></svg>ラスタツール</li>
      <li><i class="tw open"></i><svg><use href="#q"/></svg>ラスタ地形解析</li>
      <li class="l1"><i class="tw none"></i><svg><use href="#gear"/></svg>ヒプソメトリック曲線</li>
      <li class="l1"><i class="tw none"></i><svg><use href="#relief"/></svg>レリーフ</li>
      <li class="l1 big"><i class="tw none"></i><svg><use href="#relief"/></svg>陰影図</li>
      <li class="l1 big"><i class="tw none"></i><svg><use href="#relief"/></svg>起伏指標</li>
      <li class="l1 big sel"><i class="tw none"></i><svg><use href="#relief"/></svg>傾斜</li>
      <li class="l1 big"><i class="tw none"></i><svg><use href="#relief"/></svg>傾斜方位</li>
      <li><i class="tw"></i><svg><use href="#q"/></svg>ラスタ分析</li>
      <li><i class="tw"></i><svg><use href="#q"/></svg>レイヤツール</li>
      <li class="big"><i class="tw"></i><svg><use href="#q"/></svg>地図製作</li>
      <li class="big"><i class="tw"></i><svg><use href="#gdal"/></svg>GDAL</li>
      <li class="big"><i class="tw"></i><svg><use href="#grass"/></svg>GRASS</li>
      <li class="big"><i class="tw"></i><svg><use href="#tri"/></svg>Qgis2threejs</li>
      <li class="big"><i class="tw"></i><svg><use href="#gear"/></svg>qgis2web</li>
      <li class="big"><i class="tw"></i><svg><use href="#saga"/></svg>SAGA</li>
    </ul>
  </section>
</main>

<footer class="status">
  <div class="locate"><svg><use href="#search"/></svg><input aria-label="検索" placeholder="検索(Ctrl + K)"></div>
  <span class="msg">1 個の凡例アイテムが削除されました</span>
  <label for="coord">座標</label><input id="coord" class="w38" value="-158.7,58.4502"><svg><use href="#georef"/></svg>
  <label for="scale">縮尺</label><input id="scale" class="w38" value="1:4270013"><svg><use href="#search"/></svg>
  <label for="mag">拡大</label><input id="mag" class="w38" value="100%">
  <label for="rot">回転</label><input id="rot" class="w38" value="0.0°">
  <input type="checkbox" id="ren" checked><label for="ren">レンダ</label>
  <svg><use href="#wire"/></svg><span>EPSG:4326</span><svg><use href="#note"/></svg>
</footer>
</body>
</html>
```
FILE: styles.css
```css
* { box-sizing: border-box; }

body {
  margin: 0;
  height: 100vh;
  overflow: hidden;
  display: flex;
  flex-direction: column;
  background: #f1f1f1;
  color: #3c3c3c;
  font-family: Roboto, "Noto Sans CJK JP", sans-serif;
  font-size: 6px;
  line-height: 9px;
  font-feature-settings: "palt";
}

h1, h2, p, ul { margin: 0; padding: 0; font-size: inherit; font-weight: normal; }
ul { list-style: none; }
button { border: 0; padding: 0; background: none; color: inherit; font: inherit; display: flex; align-items: center; justify-content: center; }
input { font: inherit; color: inherit; border: 1px solid #c8c8c8; background: #fff; padding: 0 2px; min-width: 0; outline: 0; }
i, b { flex: none; }
svg { flex: none; }
a { color: inherit; text-decoration: none; }
.defs { position: absolute; width: 0; height: 0; }
.ja { font-size: 5px; }
.wide { font-feature-settings: normal; }
.cjk { font-family: "Noto Sans CJK JP", sans-serif; font-feature-settings: normal; }

.letterbox { flex: none; height: 27px; background: #000; }

.titlebar { flex: none; height: 11px; display: flex; align-items: center; gap: 3px; background: #fff; color: #777; }
.s9 { width: 9px; height: 9px; }
.titlebar h1 { flex: 1; }
.winbtns { display: flex; gap: 15px; padding-right: 8px; }
.winbtns svg { width: 7px; height: 7px; }

.menubar { flex: none; height: 11px; display: flex; align-items: center; gap: 8px; padding-left: 5px; font-size: 5px; color: #888; }
.menubar a { white-space: nowrap; }

.toolbar { flex: none; height: 19px; display: flex; align-items: center; padding-left: 5px; border-bottom: 1px solid #dadada; background: #f6f6f6; }
.group { display: flex; align-items: center; justify-content: space-around; min-width: 0; }
.n1 { flex: 1 1 0; }
.n2 { flex: 2 1 0; }
.n3 { flex: 3 1 0; }
.n5 { flex: 5 1 0; }
.n7 { flex: 7 1 0; }
.n8 { flex: 8 1 0; }
.n14 { flex: 14 1 0; }
.rest { width: 42px; }
.group button { width: 14px; height: 16px; }
.group svg { width: 12px; height: 12px; }
.on { background: #d8d8d8; border: 1px solid #c4c4c4; border-radius: 2px; }
.dim { opacity: .4; }
.grip { width: 8px; height: 11px; background: linear-gradient(90deg, transparent 3px, #e2e2e2 3px, #e2e2e2 5px, transparent 5px); }
.dd { width: 4px; height: 2px; background: #666; clip-path: polygon(0 0, 100% 0, 50% 100%); }
.spin { width: 41px; height: 10px; display: flex; position: relative; }
.spin input { width: 100%; padding-left: 3px; color: #888; background: #f4f4f4; border-color: #bbb; border-radius: 2px; }
.updown { position: absolute; right: 1px; top: 1px; width: 6px; height: 8px; border-left: 1px solid #ccc; background: linear-gradient(#999, #999) center 2px / 3px 1px no-repeat, linear-gradient(#999, #999) center 5px / 3px 1px no-repeat; }
.more { width: 19px; padding-left: 9px; font-size: 10px; font-weight: bold; color: #444; }

.work { flex: 1; min-height: 0; display: grid; grid-template-columns: 26px 153px 1fr 103px; }

.strip { padding-top: 6px; border-right: 1px solid #d0d0d0; background: #f7f7f7; }
.strip div { height: 16px; display: flex; align-items: center; gap: 2px; padding-left: 4px; }
.strip svg { width: 13px; height: 13px; }

.docks { display: flex; flex-direction: column; min-height: 0; }
.dock { display: flex; flex-direction: column; min-height: 0; }
.dockhead { flex: none; display: flex; align-items: center; height: 10px; gap: 1px; padding-left: 2px; font-size: 5px; }
.dockhead h2 { flex: 1; white-space: nowrap; }
.dockhead svg { width: 6px; height: 6px; }
.docktools { flex: none; display: flex; align-items: center; height: 15px; gap: 4px; padding-left: 4px; }
.docktools svg { width: 8px; height: 8px; }
.docktools button { width: 9px; height: 9px; }
.gap { width: 0; }
.frame { flex: 1; min-height: 0; position: relative; border: 1px solid #c6c6c6; background: #fff; overflow: hidden; }
.browser { flex: none; height: 231px; }
.layerpane { flex: 1; padding-top: 2px; }

.tree li { display: flex; align-items: center; height: 9px; padding-left: 3px; gap: 2px; white-space: nowrap; }
.tree svg { width: 8px; height: 8px; }
.browser .tree { padding-top: 1px; }
.tree .l1 { padding-left: 13px; }
.tree .l2 { padding-left: 23px; }
.tree .l3 { padding-left: 33px; }
.tree .sel { background: #ececec; }
.tw { width: 3px; height: 4px; margin-right: 1px; background: #666; clip-path: polygon(0 0, 100% 50%, 0 100%); }
.tw.open { clip-path: polygon(0 25%, 100% 25%, 50% 100%); }
.tw.none { background: none; }
.browser .tw { margin-right: 4px; }
.layerpane .tw { margin-right: 3px; }
.layerpane svg { margin-left: 1px; }
.layerpane .docktools svg { margin: 0; }

input[type="checkbox"] { appearance: none; width: 8px; height: 8px; margin: 0; padding: 0; border-color: #c4c4c4; }
input[type="checkbox"]:checked { background: conic-gradient(#333 0 0) 1px 3px / 2px 2px no-repeat, conic-gradient(#333 0 0) 2px 4px / 2px 2px no-repeat, conic-gradient(#333 0 0) 4px 1px / 1px 4px no-repeat, #fff; }
.off { color: #aaa; font-style: italic; }
.cur { font-weight: bold; }
.tree .leg { padding-left: 21px; gap: 3px; }
.swatch { width: 8px; height: 8px; }
.swatch.black { background: #000; }

.vbar { position: absolute; right: 0; top: 0; bottom: 7px; width: 7px; background: #e9e9e9; display: flex; flex-direction: column; align-items: center; padding: 2px 0; }
.vbar::before { content: ""; order: 1; flex: 1; }
.vbar .up { order: 0; }
.vbar span { order: 2; width: 7px; height: 48px; margin-bottom: 14px; background: #fff; border: 1px solid #d5d5d5; }
.vbar .down { order: 3; }
.hbar { position: absolute; left: 0; right: 0; bottom: 0; height: 7px; background: #f4f4f4; border-top: 1px solid #ddd; display: flex; align-items: center; justify-content: space-between; padding: 0 9px 0 2px; }
.hbar span { width: 20px; height: 6px; margin-left: 96px; background: #ddd; }
.up, .down, .left, .right { width: 4px; height: 4px; background: #555; }
.up { clip-path: polygon(50% 0, 100% 75%, 0 75%); }
.down { clip-path: polygon(0 25%, 100% 25%, 50% 100%); }
.left { clip-path: polygon(0 50%, 75% 0, 75% 100%); }
.right { clip-path: polygon(25% 0, 100% 50%, 25% 100%); }

.canvas { position: relative; margin: 1px 3px 0 2px; min-height: 0; background: #fff; border: 1px solid #ccc; border-top-color: #e4e4e4; }
.map { display: block; width: 100%; height: 100%; }

.dialog { position: absolute; left: 87px; top: 147px; width: 102px; padding-bottom: 5px; background: #f0f0f0; border: 1px solid #999; box-shadow: 1px 2px 6px rgba(0, 0, 0, .35); }
.dlghead { display: flex; align-items: center; gap: 3px; height: 15px; padding: 0 4px; background: #fff; }
.dlghead h2 { flex: 1; }
.dlghead button svg { width: 7px; height: 7px; }
.dialog p { height: 13px; padding-top: 2px; text-align: center; color: #222; }
.progress { position: relative; height: 10px; margin: 1px 5px 4px; border: 1px solid #bbb; background: #fff; font-size: 5px; line-height: 8px; text-align: center; }
.progress i { position: absolute; left: 0; top: 0; bottom: 0; width: 49%; background: #0a7be0; }
.progress span { position: relative; color: #222; }
.cancel { width: 41px; height: 10px; margin: 0 5px 0 auto; border: 1px solid #7fb5e6; background: #f6f6f6; font-size: 6px; color: #222; }

.tools .tree { flex: 1; background: #fff; border-left: 1px solid #ccc; overflow: hidden; font-size: 5px; }
.tools .tree li { gap: 3px; }
.tools .tree .sel { background: #e9e9e9; }
.tools .tree .big { font-size: 6px; }
.search { flex: none; display: flex; align-items: center; height: 12px; padding-left: 3px; gap: 3px; background: #fff; border: 1px solid #c6c6c6; }
.search svg, .locate svg { width: 7px; height: 7px; }
.search input { flex: 1; border: 0; font-style: italic; }
::placeholder { color: #aaa; }

.status { flex: none; height: 7px; overflow: hidden; display: flex; align-items: flex-start; gap: 4px; padding: 1px 4px 0 2px; white-space: nowrap; font-size: 5px; line-height: 9px; }
.status input { height: 11px; }
.status svg { width: 8px; height: 8px; margin-top: 1px; }
.locate { display: flex; width: 100px; height: 12px; padding-left: 4px; border: 1px solid #ccc; background: #fff; }
.locate svg { margin-top: 0; }
.locate input { border: 0; flex: 1; height: 8px; }
.msg { flex: 1; }
.w38 { width: 38px; }
.status input[type="checkbox"] { height: 8px; margin-top: 1px; }
```
